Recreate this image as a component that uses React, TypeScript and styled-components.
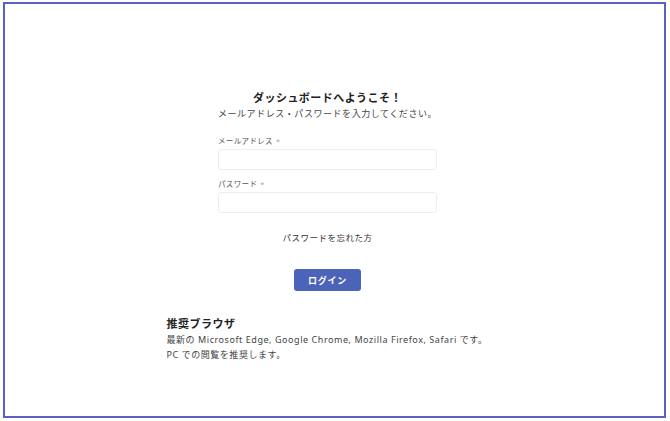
import React from 'react';
import styled, { createGlobalStyle } from 'styled-components';

const GlobalStyle = createGlobalStyle`
  html, body {
    margin: 0;
    padding: 0;
    background: #ffffff;
  }
  body {
    font-family: "Noto Sans", "Noto Sans CJK JP", sans-serif;
    color: #333;
  }
`;

const Frame = styled.div`
  box-sizing: border-box;
  margin: 2px 4px 3px 3px;
  height: 416px;
  border: 2px solid #5a60c4;
  display: flex;
  justify-content: center;
  padding-right: 14px;
`;

const Column = styled.div`
  width: 322px;
  padding-top: 86px;
  display: flex;
  flex-direction: column;
  align-items: center;
`;

const Title = styled.h1`
  margin: 0;
  font-size: 11px;
  font-weight: 700;
  letter-spacing: 0.45px;
  line-height: 16px;
  color: #222;
`;

const Subtitle = styled.p`
  margin: 0;
  font-size: 9px;
  letter-spacing: 0.55px;
  line-height: 16px;
  color: #444;
`;

const Form = styled.form`
  width: 219px;
  margin-top: 13px;
  display: flex;
  flex-direction: column;
`;

const Field = styled.div`
  display: flex;
  flex-direction: column;
  margin-bottom: 8px;
`;

const Label = styled.label`
  font-size: 7.5px;
  letter-spacing: 0.35px;
  line-height: 12px;
  color: #555;
  margin-bottom: 2px;
`;

const Required = styled.span`
  color: #c99;
  margin-left: 3px;
`;

const Input = styled.input`
  box-sizing: border-box;
  height: 21px;
  width: 100%;
  border: 1px solid #eeeeee;
  border-radius: 3px;
  outline: none;
  padding: 0 6px;
  font: inherit;
`;

const Forgot = styled.a`
  align-self: center;
  margin-top: 10px;
  font-size: 8.5px;
  letter-spacing: 0.5px;
  line-height: 14px;
  color: #333;
  text-decoration: none;
`;

const LoginButton = styled.button`
  align-self: center;
  margin-top: 24px;
  width: 67px;
  height: 22px;
  border: none;
  border-radius: 3px;
  background: #4b63b8;
  color: #fff;
  font-family: inherit;
  font-size: 9px;
  font-weight: 700;
  letter-spacing: 0.8px;
  cursor: pointer;
`;

const Notice = styled.section`
  align-self: stretch;
  margin-top: 25px;
`;

const NoticeTitle = styled.h2`
  margin: 0;
  font-size: 11px;
  font-weight: 700;
  letter-spacing: 0.5px;
  line-height: 16px;
  color: #222;
`;

const NoticeText = styled.p`
  margin: 0;
  font-size: 9px;
  letter-spacing: 0.55px;
  line-height: 15px;
  color: #444;
  white-space: nowrap;
`;

export default function App() {
  return (
    <>
      <GlobalStyle />
      <Frame>
        <Column>
          <Title>ダッシュボードへようこそ！</Title>
          <Subtitle>メールアドレス・パスワードを入力してください。</Subtitle>
          <Form onSubmit={(e) => e.preventDefault()}>
            <Field>
              <Label>
                メールアドレス<Required>*</Required>
              </Label>
              <Input type="email" />
            </Field>
            <Field>
              <Label>
                パスワード<Required>*</Required>
              </Label>
              <Input type="password" />
            </Field>
            <Forgot href="#">パスワードを忘れた方</Forgot>
            <LoginButton type="submit">ログイン</LoginButton>
          </Form>
          <Notice>
            <NoticeTitle>推奨ブラウザ</NoticeTitle>
            <NoticeText>最新の Microsoft Edge, Google Chrome, Mozilla Firefox, Safari です。</NoticeText>
            <NoticeText>PC での閲覧を推奨します。</NoticeText>
          </Notice>
        </Column>
      </Frame>
    </>
  );
}
